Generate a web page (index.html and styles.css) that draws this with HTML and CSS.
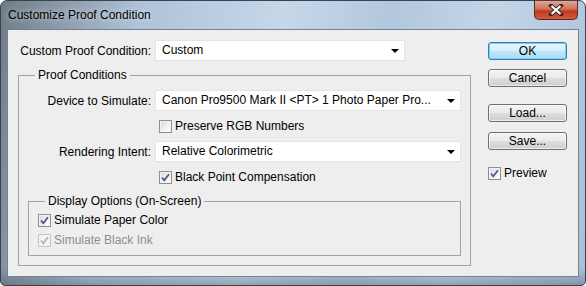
FILE: index.html
```html
<!DOCTYPE html>
<html lang="en">
<head>
    <meta charset="UTF-8">
    <title>Customize Proof Condition</title>
    <link rel="stylesheet" href="styles.css">
</head>
<body>
    <div class="window">
        <div class="titlebar">
            <span class="title">Customize Proof Condition</span>
            <div class="close">
                <svg width="16" height="12" viewBox="0 0 16 12">
                    <path d="M3 1.5 L13 10.5 M13 1.5 L3 10.5" stroke="#3a2a28" stroke-width="4" stroke-linecap="square"/>
                    <path d="M3.5 2 L12.5 10 M12.5 2 L3.5 10" stroke="#ffffff" stroke-width="2.2"/>
                </svg>
            </div>
        </div>
        <div class="client">
            <div class="main">
                <div class="row first">
                    <span class="lbl">Custom Proof Condition:</span>
                    <div class="select short">Custom<span class="arrow"></span></div>
                </div>

                <fieldset class="group outer">
                    <legend>Proof Conditions</legend>
                    <div class="row gap-top">
                        <span class="lbl in">Device to Simulate:</span>
                        <div class="select wide">Canon Pro9500 Mark II &lt;PT&gt; 1 Photo Paper Pro...<span class="arrow"></span></div>
                    </div>
                    <div class="check indent">
                        <span class="box"></span>
                        <span>Preserve RGB Numbers</span>
                    </div>
                    <div class="row gap-top">
                        <span class="lbl in">Rendering Intent:</span>
                        <div class="select wide">Relative Colorimetric<span class="arrow"></span></div>
                    </div>
                    <div class="check indent">
                        <span class="box checked"><svg width="11" height="11" viewBox="0 0 11 11"><path d="M2 5.5 L4.3 8.3 L9 2.2" fill="none" stroke="#4a5c8c" stroke-width="1.8"/></svg></span>
                        <span>Black Point Compensation</span>
                    </div>

                    <fieldset class="group inner">
                        <legend>Display Options (On-Screen)</legend>
                        <div class="check sub first-sub">
                            <span class="box checked"><svg width="11" height="11" viewBox="0 0 11 11"><path d="M2 5.5 L4.3 8.3 L9 2.2" fill="none" stroke="#4a5c8c" stroke-width="1.8"/></svg></span>
                            <span>Simulate Paper Color</span>
                        </div>
                        <div class="check sub disabled">
                            <span class="box checked"><svg width="11" height="11" viewBox="0 0 11 11"><path d="M2 5.5 L4.3 8.3 L9 2.2" fill="none" stroke="#b4b4b4" stroke-width="1.8"/></svg></span>
                            <span>Simulate Black Ink</span>
                        </div>
                    </fieldset>
                </fieldset>
            </div>

            <div class="side">
                <div class="btn default">OK</div>
                <div class="btn cancel">Cancel</div>
                <div class="btn load">Load...</div>
                <div class="btn save">Save...</div>
                <div class="check preview">
                    <span class="box checked"><svg width="11" height="11" viewBox="0 0 11 11"><path d="M2 5.5 L4.3 8.3 L9 2.2" fill="none" stroke="#4a5c8c" stroke-width="1.8"/></svg></span>
                    <span>Preview</span>
                </div>
            </div>
        </div>
    </div>
</body>
</html>
```

FILE: styles.css
```css
body {
    margin: 0;
    font-family: "Liberation Sans", Arial, sans-serif;
    font-size: 12px;
    color: #000;
    background: #ffffff;
}
.window {
    width: 586px;
    height: 286px;
    box-sizing: border-box;
    border: 1px solid #3d4247;
    border-radius: 7px 7px 5px 5px;
    background:
        linear-gradient(to bottom, rgba(0,0,0,0) 0%, rgba(0,0,0,0) 94%, rgba(60,70,80,0.35) 100%),
        linear-gradient(100deg, #6f7b87 0%, #aec2d8 22%, #c6d7ea 45%, #b2c7dd 62%, #c4d5e8 78%, #a9bfd7 100%);
    overflow: hidden;
}
.titlebar {
    height: 28px;
    display: flex;
    justify-content: space-between;
    align-items: flex-start;
}
.title {
    margin: 7px 0 0 7px;
    font-size: 12px;
    line-height: 14px;
    color: #000;
    text-shadow: 0 0 6px rgba(255,255,255,0.8);
}
.close {
    width: 44px;
    height: 19px;
    margin-right: 7px;
    box-sizing: border-box;
    border: 1px solid #5b2a22;
    border-top: none;
    border-radius: 0 0 5px 5px;
    background: linear-gradient(#e3a493 0%, #d0715b 45%, #c0391f 55%, #cf5d3e 100%);
    display: flex;
    justify-content: center;
    align-items: center;
}
.client {
    margin: 0 6px 0 6px;
    height: 248px;
    box-sizing: border-box;
    border: 1px solid #76828f;
    background-color: #eeeeee;
    display: flex;
}
.main {
    width: 463px;
    padding-left: 10px;
}
.row {
    display: flex;
    align-items: center;
}
.row.first {
    margin-top: 10px;
}
.row.gap-top {
    margin-top: 8px;
}
.lbl {
    width: 133px;
    margin-right: 4px;
    text-align: right;
    white-space: nowrap;
}
.lbl.in {
    width: 132px;
}
.select {
    position: relative;
    height: 21px;
    box-sizing: border-box;
    border: 1px solid #e4e4e4;
    background-color: #ffffff;
    padding-left: 6px;
    line-height: 19px;
    white-space: nowrap;
}
.select.short {
    width: 250px;
}
.select.wide {
    width: 306px;
}
.arrow {
    position: absolute;
    right: 5px;
    top: 8px;
    width: 0;
    height: 0;
    border-left: 4px solid transparent;
    border-right: 4px solid transparent;
    border-top: 4px solid #000;
}
.group {
    margin: 0;
    padding: 0;
    border: 1px solid #a3a3a3;
    min-width: 0;
    box-sizing: border-box;
}
.group legend {
    margin-left: 16px;
    padding: 0 3px;
    line-height: 14px;
}
.group.outer {
    width: 453px;
    margin-top: 7px;
}
.group.inner {
    width: 433px;
    margin: 10px 0 9px 9px;
    padding-bottom: 8px;
}
.check {
    display: flex;
    align-items: center;
    height: 13px;
    line-height: 13px;
    white-space: nowrap;
}
.check.indent {
    margin: 9px 0 0 140px;
}
.check.sub {
    margin: 7px 0 0 9px;
}
.check.first-sub {
    margin-top: 6px;
}
.check.disabled {
    color: #8d8d8d;
}
.box {
    width: 13px;
    height: 13px;
    box-sizing: border-box;
    border: 1px solid #8e8f8f;
    margin-right: 3px;
    background: linear-gradient(135deg, #d6d6d6 0%, #f4f4f4 60%, #ffffff 100%);
    box-shadow: inset 0 0 0 1px #f4f4f4;
    display: flex;
    justify-content: center;
    align-items: center;
    flex-shrink: 0;
}
.disabled .box {
    border-color: #c4c4c4;
    background: #f4f4f4;
}
.side {
    margin-left: 7px;
    padding-top: 12px;
    width: 79px;
}
.btn {
    height: 18px;
    box-sizing: border-box;
    border: 1px solid #707070;
    border-radius: 3px;
    background: linear-gradient(#f3f3f3 0%, #ebebeb 48%, #dddddd 52%, #cfcfcf 100%);
    box-shadow: inset 0 0 0 1px rgba(255,255,255,0.6);
    text-align: center;
    line-height: 16px;
}
.btn.default {
    border-color: #3c7fb1;
    background: linear-gradient(#e9f6fd 0%, #d6effc 48%, #bfe6fb 52%, #a8dbf6 100%);
    box-shadow: inset 0 0 0 1px #74cdf3;
}
.btn.cancel {
    margin-top: 9px;
}
.btn.load {
    margin-top: 17px;
}
.btn.save {
    margin-top: 10px;
}
.check.preview {
    margin-top: 17px;
    margin-left: 0;
}
```
